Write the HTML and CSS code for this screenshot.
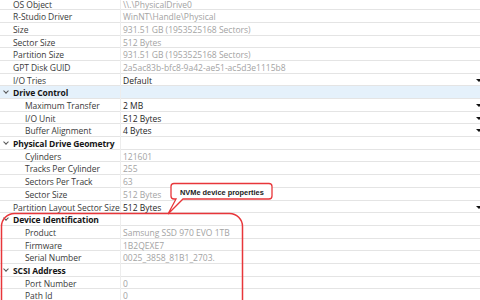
FILE: index.html
```html
<!DOCTYPE html>
<html lang="en">
<head>
  <meta charset="UTF-8" />
  <title>Drive Properties</title>
  <link rel="stylesheet" href="styles.css">
</head>
<body>

  <div class="props">
    <div class="row"><div class="name">OS Object</div><div class="val ro">\\.\PhysicalDrive0</div></div>
    <div class="row"><div class="name">R-Studio Driver</div><div class="val ro">WinNT\Handle\Physical</div></div>
    <div class="row"><div class="name">Size</div><div class="val ro">931.51 GB (1953525168 Sectors)</div></div>
    <div class="row"><div class="name">Sector Size</div><div class="val ro">512 Bytes</div></div>
    <div class="row"><div class="name">Partition Size</div><div class="val ro">931.51 GB (1953525168 Sectors)</div></div>
    <div class="row"><div class="name">GPT Disk GUID</div><div class="val ro">2a5ac83b-bfc8-9a42-ae51-ac5d3e1115b8</div></div>
    <div class="row"><div class="name">I/O Tries</div><div class="val drop">Default</div></div>

    <div class="row cat selected"><div class="name"><span class="chev"></span>Drive Control</div><div class="val"></div></div>
    <div class="row"><div class="name sub">Maximum Transfer</div><div class="val drop">2 MB</div></div>
    <div class="row"><div class="name sub">I/O Unit</div><div class="val drop">512 Bytes</div></div>
    <div class="row"><div class="name sub">Buffer Alignment</div><div class="val drop">4 Bytes</div></div>

    <div class="row cat"><div class="name"><span class="chev"></span>Physical Drive Geometry</div><div class="val"></div></div>
    <div class="row"><div class="name sub">Cylinders</div><div class="val ro">121601</div></div>
    <div class="row"><div class="name sub">Tracks Per Cylinder</div><div class="val ro">255</div></div>
    <div class="row"><div class="name sub">Sectors Per Track</div><div class="val ro">63</div></div>
    <div class="row"><div class="name sub">Sector Size</div><div class="val ro">512 Bytes</div></div>
    <div class="row"><div class="name">Partition Layout Sector Size</div><div class="val drop">512 Bytes</div></div>

    <div class="row cat"><div class="name"><span class="chev"></span>Device Identification</div><div class="val"></div></div>
    <div class="row"><div class="name sub">Product</div><div class="val ro">Samsung SSD 970 EVO 1TB</div></div>
    <div class="row"><div class="name sub">Firmware</div><div class="val ro">1B2QEXE7</div></div>
    <div class="row"><div class="name sub">Serial Number</div><div class="val ro">0025_3858_81B1_2703.</div></div>

    <div class="row cat"><div class="name"><span class="chev"></span>SCSI Address</div><div class="val"></div></div>
    <div class="row"><div class="name sub">Port Number</div><div class="val ro">0</div></div>
    <div class="row"><div class="name sub">Path Id</div><div class="val ro">0</div></div>
  </div>

  <svg class="marks" width="480" height="300" viewBox="0 0 480 300">
    <rect x="1.5" y="213.5" width="241" height="130" rx="13" fill="none" stroke="#e8363a" stroke-width="1.5"/>
    <path d="M174 183.5 H269 Q272 183.5 272 186.5 V196 Q272 199 269 199 H183 L168 214 L176 199 H174 Q171 199 171 196 V186.5 Q171 183.5 174 183.5 Z"
          fill="#fff" stroke="#e8363a" stroke-width="1.3"/>
    <text x="180" y="194.5" class="note">NVMe device properties</text>
  </svg>

</body>
</html>
```

FILE: styles.css
```css
* {
  box-sizing: border-box;
}
body {
  margin: 0;
  width: 480px;
  height: 300px;
  overflow: hidden;
  position: relative;
  background: #fff;
  font-family: "Open Sans", "Noto Sans", sans-serif;
  font-size: 8.5px;
}

.props {
  margin-top: -2.5px;
}

.row {
  display: grid;
  grid-template-columns: 121px 1fr;
  height: 12.7px;
  border-bottom: 1px solid #e4e4e4;
  line-height: 11.7px;
}

.name {
  color: #3a3a3a;
  padding-left: 13px;
  padding-top: 1px;
  white-space: nowrap;
  border-right: 1px solid #ededed;
  position: relative;
  letter-spacing: -0.05px;
}
.name.sub {
  padding-left: 25px;
}

.val {
  padding-left: 2px;
  padding-top: 1px;
  white-space: nowrap;
  color: #1e1e1e;
  position: relative;
}
.val.ro {
  color: #a3a3a3;
}
.val.drop::after {
  content: "";
  position: absolute;
  right: -2px;
  top: 5px;
  border-left: 3px solid transparent;
  border-right: 3px solid transparent;
  border-top: 3px solid #111;
}

.cat .name {
  font-weight: 700;
  color: #161616;
  letter-spacing: -0.1px;
}
.selected {
  background: #e5f1fb;
}

.chev {
  position: absolute;
  left: 4px;
  top: 3px;
  width: 4px;
  height: 4px;
  border-right: 1px solid #555;
  border-bottom: 1px solid #555;
  transform: rotate(45deg);
}

.marks {
  position: absolute;
  left: 0;
  top: 0;
}
.note {
  font-family: "Liberation Sans", Arial, sans-serif;
  font-weight: 700;
  font-size: 7.4px;
  fill: #1a1a1a;
}
```
